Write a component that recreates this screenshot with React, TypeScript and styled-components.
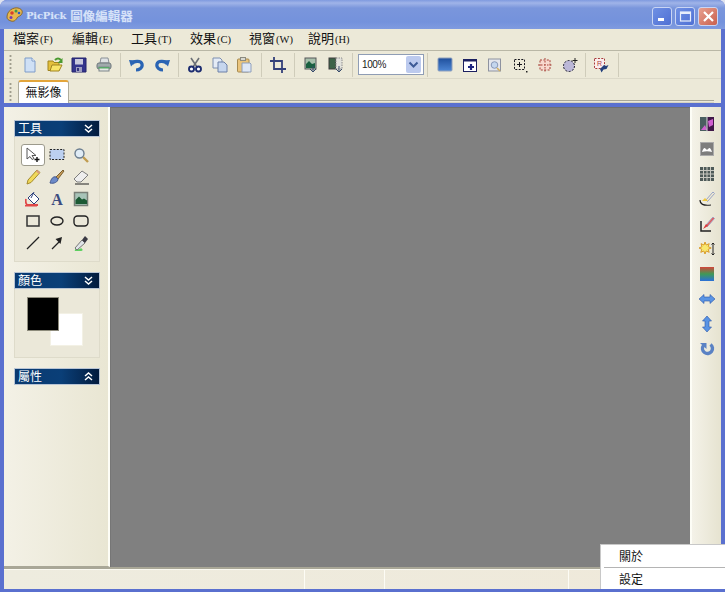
import React from "react";
import styled, { createGlobalStyle } from "styled-components";

const Global = createGlobalStyle`
  html, body { margin: 0; padding: 0; background: #dfe3ee; overflow: hidden; }
  * { box-sizing: border-box; }
`;

const cjk = `"Noto Sans CJK TC", "Noto Sans CJK SC", "Liberation Sans", sans-serif`;

const Window = styled.div`
  position: relative;
  width: 725px;
  height: 592px;
  display: flex;
  flex-direction: column;
  padding: 0 4px 3px;
  background: #5a70cf;
  border-radius: 7px 7px 0 0;
  overflow: hidden;
  font-family: ${cjk};
`;
const TitleBar = styled.div`
  height: 29px;
  margin: 0 -4px;
  padding: 0 6px 0 6px;
  display: flex;
  align-items: center;
  gap: 2px;
  background: linear-gradient(180deg, #7f9adf 0, #a0b4e8 3px, #7a96dc 8px, #7492dc 22px, #7f9be0 29px);
`;
const TitleText = styled.div`
  flex: 1;
  display: flex;
  align-items: center;
  gap: 4px;
  color: #d6e2f8;
  text-shadow: 0 0 1px #8ca5e6;
  padding-top: 1px;
`;
const TitleLatin = styled.span`
  font: bold 10px "DejaVu Serif", serif;
  letter-spacing: -0.2px;
`;
const TitleCjk = styled.span`
  font: bold 12.5px ${cjk};
`;
const CapButtons = styled.div`
  display: flex;
  gap: 3px;
  margin-top: 3px;
  margin-right: 1px;
`;
const CapButton = styled.div<{ $close?: boolean }>`
  width: 20px;
  height: 19px;
  border-radius: 3px;
  border: 1px solid #c9d5f4;
  background: ${(p) => (p.$close ? "linear-gradient(135deg,#e8a090,#c9604e)" : "linear-gradient(135deg,#6f90e4,#4f70d4)")};
  display: flex;
  align-items: center;
  justify-content: center;
`;
const MenuBar = styled.div`
  height: 21px;
  display: flex;
  align-items: center;
  padding: 0 0 3px 9px;
  gap: 17px;
  background: #ece9d8;
  font-size: 13px;
  color: #111;
`;
const MenuItem = styled.span`
  white-space: nowrap;
  width: 42px;
  line-height: 18px;
`;
const Mnemonic = styled.span`
  font: 10.5px "Liberation Serif", serif;
  margin-left: 1px;
`;
const ToolBar = styled.div`
  height: 29px;
  display: flex;
  align-items: center;
  padding-left: 5px;
  background: #ece9d8;
  border-top: 1px solid #b9b7a6;
  border-bottom: 1px solid #dcd9c9;
`;
const Grip = styled.div`
  width: 3px;
  height: 21px;
  margin-right: 6px;
  background-image: radial-gradient(circle, #a09e8e 1px, transparent 1.2px);
  background-size: 3px 4px;
  flex: none;
`;
const ToolBtn = styled.div<{ $wide?: boolean }>`
  width: ${(p) => (p.$wide ? 25 : 24.5)}px;
  height: 24px;
  display: flex;
  align-items: center;
  justify-content: center;
  flex: none;
`;
const Sep = styled.div<{ $tight?: boolean }>`
  width: 1px;
  height: 24px;
  margin: 0 ${(p) => (p.$tight ? 3 : 4)}px;
  background: #cfccba;
  flex: none;
`;
const Combo = styled.div`
  width: 66px;
  height: 21px;
  margin: 0 -1px 0 1px;
  padding: 0 2px 0 3px;
  display: flex;
  align-items: center;
  justify-content: space-between;
  background: #fff;
  border: 1px solid #8f9db5;
  font: 10px "Liberation Sans", sans-serif;
  letter-spacing: -0.4px;
  color: #222;
  flex: none;
`;
const ComboArrow = styled.div`
  width: 15px;
  height: 17px;
  border-radius: 2px;
  background: #bccaee;
  display: flex;
  align-items: center;
  justify-content: center;
`;
const TabBar = styled.div`
  height: 24px;
  display: flex;
  align-items: flex-end;
  padding: 0 6px 0 5px;
  background: #ece9d8;
  position: relative;
`;
const TabLine = styled.div`
  position: absolute;
  left: 65px;
  right: 7px;
  bottom: 0;
  height: 3px;
  border-top: 1px solid #a9a797;
  border-bottom: 1px solid #d5d2c2;
`;
const Tab = styled.div`
  width: 51px;
  height: 23px;
  background: #fff;
  border: 1px solid #aeac9c;
  border-bottom: none;
  border-top: 2px solid #e3a53a;
  border-radius: 3px 3px 0 0;
  font-size: 12px;
  line-height: 19px;
  color: #111;
  text-align: center;
`;
const Content = styled.div`
  flex: 1;
  display: flex;
  min-height: 0;
  margin-top: 4px;
  border-bottom: 2px solid #a9a797;
  background: #ece9d8;
`;
const LeftDock = styled.div`
  width: 106px;
  padding: 13px 9px 0 10px;
  display: flex;
  flex-direction: column;
  gap: 10px;
  background: linear-gradient(90deg, #f3f1e6, #e9e6d3);
  border-right: 2px solid #fdfdf6;
  border-bottom: 1px solid #a9a797;
  flex: none;
`;
const Panel = styled.div`
  width: 86px;
  display: flex;
  flex-direction: column;
`;
const PanelHead = styled.div`
  height: 17px;
  padding: 0 6px 1px 3px;
  display: flex;
  align-items: center;
  justify-content: space-between;
  color: #fff;
  font-size: 12px;
  line-height: 14px;
  background: linear-gradient(90deg, #0a3a70, #0a3f78 55%, #021b3e);
  border: 1px solid #b8c4d4;
`;
const PanelBody = styled.div<{ $h: number }>`
  height: ${(p) => p.$h}px;
  background: #ebe8d9;
  border: 1px solid #dedbca;
  border-top: none;
  position: relative;
`;
const ToolGrid = styled.div`
  display: grid;
  grid-template-columns: repeat(3, 24px);
  grid-auto-rows: 22px;
  padding: 7px 0 0 6px;
`;
const ToolCell = styled.div<{ $active?: boolean }>`
  display: flex;
  align-items: center;
  justify-content: center;
  border-radius: 3px;
  background: ${(p) => (p.$active ? "#fff" : "transparent")};
  border: ${(p) => (p.$active ? "1px solid #9c9a8c" : "none")};
`;
const Swatch = styled.div<{ $fg?: boolean }>`
  position: absolute;
  left: ${(p) => (p.$fg ? 12 : 35)}px;
  top: ${(p) => (p.$fg ? 8 : 24)}px;
  width: ${(p) => (p.$fg ? 32 : 33)}px;
  height: ${(p) => (p.$fg ? 34 : 33)}px;
  background: ${(p) => (p.$fg ? "#000" : "#fff")};
  border: ${(p) => (p.$fg ? "1px solid #8d8b7c" : "1px solid #f3f1e5")};
  z-index: ${(p) => (p.$fg ? 1 : 0)};
`;
const Canvas = styled.div`
  flex: 1;
  background: #808080;
  border-top: 1px solid #6f6f6f;
  border-left: 1px solid #767676;
`;
const RightDock = styled.div`
  width: 31px;
  padding: 4px 0 0 1px;
  display: flex;
  flex-direction: column;
  align-items: center;
  background: linear-gradient(90deg, #f4f2e8, #e6e3d0);
  border-left: 2px solid #fdfdf6;
  flex: none;
`;
const DockBtn = styled.div`
  height: 25px;
  width: 24px;
  display: flex;
  align-items: center;
  justify-content: center;
  flex: none;
`;
const StatusBar = styled.div`
  height: 20px;
  display: flex;
  background: linear-gradient(90deg, #eeecdf, #efe9da);
  border-top: 1px solid #fbfaf2;
`;
const StatusCell = styled.div<{ $w?: number }>`
  width: ${(p) => (p.$w ? `${p.$w}px` : "auto")};
  flex: ${(p) => (p.$w ? "none" : "1")};
  border-right: 1px solid #fdfcf5;
`;
const PopMenu = styled.div`
  position: absolute;
  left: 600px;
  top: 544px;
  width: 125px;
  height: 45px;
  background: #fff;
  border-left: 1px solid #c8c8c8;
  border-top: 1px solid #c8c8c8;
  padding-left: 18px;
  font-size: 12px;
  color: #111;
  overflow: hidden;
`;
const PopItem = styled.div`
  height: 22px;
  line-height: 22px;
`;
const PopSep = styled.div`
  height: 1px;
  margin: 0 0 0 -15px;
  background: #b4b4b4;
`;

type S = { children: React.ReactNode };
const I = ({ children }: S) => <svg width="16" height="16" viewBox="0 0 16 16">{children}</svg>;

const sel = (c: string, fill = "none") => (
  <rect x="2.5" y="2.5" width="10" height="10" fill={fill} stroke={c} strokeDasharray="2 1.4" />
);

const toolbarIcons: Record<string, React.ReactNode> = {
  new: <I><path d="M3 1h7l3 3v11H3z" fill="#cfe0f5" stroke="#7f9cc8" /><path d="M10 1v3h3" fill="#fff" stroke="#7f9cc8" /></I>,
  open: <I><path d="M1 4h5l1 1.500h5v8H1z" fill="#e4c03c" stroke="#a08420" /><path d="M3 14l2-6h10l-3 6z" fill="#f8e468" stroke="#a08420" /><path d="M8 3c2-2 4-2 6 0" fill="none" stroke="#4a9a30" strokeWidth="2" /><path d="M15.500 1v5h-5z" fill="#4a9a30" /></I>,
  save: <I><path d="M1 1h14v14H1z" fill="#34348c" stroke="#24246c" /><rect x="4" y="2" width="8" height="5.500" fill="#c8c8dc" /><rect x="5" y="10" width="6" height="5" fill="#9e9ec0" /><rect x="6" y="11" width="2" height="3" fill="#33337c" /></I>,
  print: <I><path d="M4 6l1-5h7l1 5z" fill="#dfe2e4" stroke="#8a9096" /><rect x="1" y="6" width="14" height="6" rx="2" fill="#a0aaac" stroke="#6f777c" /><rect x="3" y="10" width="10" height="4" fill="#e4e8e4" stroke="#7d8589" /><rect x="2.500" y="10" width="11" height="1.500" fill="#58a868" /></I>,
  undo: <I><path d="M3 7c1-3 9-4 10 0 1 4-3 6-6 6" fill="none" stroke="#2a64b4" strokeWidth="3.200" /><path d="M0 3l7.500 .5-5.500 6z" fill="#2a64b4" /></I>,
  redo: <I><path d="M13 7c-1-3-9-4-10 0-1 4 3 6 6 6" fill="none" stroke="#2a64b4" strokeWidth="3.200" /><path d="M16 3l-7.500 .5 5.500 6z" fill="#2a64b4" /></I>,
  cut: <I><path d="M4 1l6 9M12 1l-6 9" stroke="#6d7177" strokeWidth="1.600" /><circle cx="4.500" cy="12" r="2.500" fill="#fff" stroke="#1c2c70" strokeWidth="1.900" /><circle cx="11.500" cy="12" r="2.500" fill="#fff" stroke="#1c2c70" strokeWidth="1.900" /></I>,
  copy: <I><path d="M1 1h7l2 2v8H1z" fill="#e4ebf6" stroke="#7d8fb0" /><path d="M6 5h6l3 3v7H6z" fill="#c6d6ee" stroke="#6d80a8" /></I>,
  paste: <I><rect x="1.500" y="2" width="11.500" height="13" rx="1" fill="#eac47c" stroke="#a68a50" /><rect x="4.500" y="0.500" width="5" height="3" fill="#d8d8d0" stroke="#8b8b80" /><path d="M6 6h8l1 1v8H6z" fill="#dfe8f6" stroke="#8fa0bc" /></I>,
  crop: <I><path d="M4 0v12h12M0 4h12v12" fill="none" stroke="#33407a" strokeWidth="1.800" /></I>,
  imp: <I><rect x="2" y="1" width="11" height="11" fill="#a8c0ac" stroke="#56585a" /><path d="M3 7l3-3 3 3 3-1v5H3z" fill="#1a6040" /><path d="M10 9v6M7 12l3 3 3-3" stroke="#394c6c" fill="none" /></I>,
  exp: <I><rect x="1" y="1" width="7" height="11" fill="#3c6248" stroke="#3c3c3c" /><rect x="8" y="1" width="6" height="11" fill="#e2e2dc" stroke="#8c8c8c" strokeDasharray="1.500 1" /><path d="M11 9v6M8 12l3 3 3-3" stroke="#394c6c" fill="none" /></I>,
  win: <I><defs><linearGradient id="wg" x1="0" y1="0" x2="0" y2="1"><stop offset="0" stopColor="#1f4f9c" /><stop offset="1" stopColor="#4d86d4" /></linearGradient></defs><rect x="1" y="1" width="14" height="13" rx="1" fill="url(#wg)" stroke="#8fa0bc" /></I>,
  winAdd: <I><rect x="1.500" y="2.500" width="13" height="12" fill="#fff" stroke="#1c2060" /><rect x="1.500" y="2.500" width="13" height="2" fill="#1c2060" /><path d="M9 7v6M6 10h6" stroke="#1c2480" strokeWidth="2.200" /></I>,
  page: <I><rect x="1.500" y="2" width="12" height="12" fill="#e4e6ec" stroke="#8e93a0" /><circle cx="7.500" cy="8" r="3.300" fill="#c4d6ee" stroke="#8898b8" /><path d="M10 11l3 3" stroke="#d2b060" strokeWidth="1.600" /></I>,
  selAdd: <I>{sel("#15151c")}<path d="M7.500 5v5M5 7.500h5" stroke="#15151c" /><path d="M14 14h1.500v1.500H14z" fill="#222" /></I>,
  selRed: <I><rect x="3" y="3" width="10" height="10" fill="#f8d8d0" stroke="#a84038" strokeDasharray="2 1.400" /><path d="M8 1v14M1 8h14" stroke="#a84038" strokeDasharray="1.500 1.500" /></I>,
  lasso: <I><circle cx="7" cy="9" r="5.500" fill="#bcb8d8" stroke="#1e1e30" strokeDasharray="2 1.400" /><path d="M13 1v5M10.500 3.500h5" stroke="#222" /></I>,
  snap: <I><rect x="1.500" y="1.500" width="10" height="10" fill="#fbeeee" stroke="#a83c3c" strokeDasharray="2 1.400" /><text x="6.500" y="8.500" textAnchor="middle" fontFamily="Liberation Sans" fontSize="7" fill="#b04040">R</text><path d="M7 12l4-4 2 1 2.500-1-2 4-3 .5-2 3z" fill="#23407c" /></I>,
};

const toolIcons: Record<string, React.ReactNode> = {
  pointer: <I><path d="M2 1v11l3-2.500 2 3 2-1-2-3h4z" fill="#fff" stroke="#555" /><path d="M12 10v5M9.500 12.500h5" stroke="#111" strokeWidth="1.400" /></I>,
  marquee: <I><rect x="1" y="2.500" width="14" height="10" fill="#bcd0f0" stroke="#222" strokeDasharray="2 1.400" /></I>,
  zoom: <I><path d="M10 10l5 5" stroke="#c09c50" strokeWidth="2.400" /><circle cx="6.500" cy="6.500" r="4.500" fill="#e0ecf6" stroke="#6c7e90" strokeWidth="1.400" /></I>,
  pencil: <I><path d="M3 11l9-10 3 2.500-9 10-4 1.500z" fill="#f1d95a" stroke="#a48a2a" /><path d="M12 1l3 2.500-1 1.500-3-2.500z" fill="#d89a80" /></I>,
  brush: <I><path d="M7 8l7-7 1 1-6 8z" fill="#c89c58" stroke="#7a6030" /><path d="M1 14c1-4 3-7 6-6l2 2c0 3-4 5-8 4z" fill="#6c8ac8" stroke="#465a90" /></I>,
  eraser: <I><path d="M1 10l8-8 6 4-7 7H4z" fill="#eee" stroke="#7d7d7d" /><path d="M2 15h14" stroke="#222" /></I>,
  fill: <I><path d="M3 7l5-5 6 6-5 5z" fill="#fff" stroke="#2b3f7a" /><path d="M6 7l3-6" stroke="#2b3f7a" /><path d="M1 8c-1 3 0 4 1 6h11" fill="none" stroke="#e04848" strokeWidth="1.800" /><path d="M0 14h12v1.500H0z" fill="#e04848" /></I>,
  text: <I><text x="8" y="13.500" textAnchor="middle" fontFamily="Liberation Serif" fontWeight="bold" fontSize="16" fill="#3c4c80">A</text></I>,
  image: <I><rect x="1.500" y="1.500" width="13" height="13" fill="#a8c4b8" stroke="#7a8078" strokeWidth="1.500" /><path d="M2.500 9l3.500-3.500 3 3 2-1 3 2v3.500H2.500z" fill="#1c5a34" /></I>,
  rect: <I><rect x="2" y="3" width="12" height="10" fill="none" stroke="#333" strokeWidth="1.500" /></I>,
  ellipse: <I><ellipse cx="8" cy="8" rx="6" ry="4" fill="none" stroke="#222" strokeWidth="1.400" /></I>,
  round: <I><rect x="1" y="3" width="14" height="10" rx="3.500" fill="none" stroke="#222" strokeWidth="1.400" /></I>,
  line: <I><path d="M2 14L14 2" stroke="#222" strokeWidth="1.200" /></I>,
  arrow: <I><path d="M3 14l7-7" stroke="#222" strokeWidth="1.300" /><path d="M13 2l-1.500 7-5-5z" fill="#222" /></I>,
  dropper: <I><path d="M2 15c3 1 6 0 7-1" stroke="#5ed060" strokeWidth="2.500" fill="none" /><path d="M2 13l7-8 3 3-8 7z" fill="#dfe4e8" stroke="#777" /><path d="M9 5l3-4 3 3-3 4z" fill="#3a3a44" /></I>,
};

const dockIcons: React.ReactNode[] = [
  <I key="0"><rect x="1" y="1" width="7" height="14" fill="#4a5e60" /><rect x="8" y="1" width="7" height="14" fill="#401848" /><path d="M2 14l4-5 2 5zM9 5l5-2v6l-4 2z" fill="#d060d0" /><path d="M8 0v16" stroke="#dcdcdc" /></I>,
  <I key="1"><rect x="1.500" y="1.500" width="13" height="13" fill="#7d7d7d" stroke="#aaa" /><path d="M3 11c2-6 3-4 5-2 2-2 3-4 5 2-3-1-7-1-10 0z" fill="#fff" /></I>,
  <I key="2"><rect x="1" y="1" width="14" height="14" fill="#4e5a58" /><path d="M1 4.500h14M1 8h14M1 11.500h14M4.500 1v14M8 1v14M11.500 1v14" stroke="#c8c8c0" /></I>,
  <I key="3"><path d="M7 9l7-8 1.500 1.500-7 8z" fill="#f3ecd0" stroke="#96a2c8" /><path d="M1 9c0 4 3 6 11 5" fill="none" stroke="#222" strokeWidth="1.200" /><path d="M3 10l3-3 3 3" fill="#f0c840" /></I>,
  <I key="4"><path d="M7 9l7-8 1.500 1.500-7 8z" fill="#e85a5a" stroke="#a2a2c0" /><path d="M2 5v10h10" fill="none" stroke="#222" strokeWidth="1.500" /><path d="M4 13l3-5 2 2z" fill="#d83a3a" /></I>,
  <I key="5"><path d="M6 1l1.200 3 3-1.300-1 3 3 1.300-3 1.300 1 3-3-1.300L6 13l-1.200-3-3 1.300 1-3L0 7l3-1.300-1-3 3 1.300z" fill="#f8e870" stroke="#d89a28" /><path d="M14 2v12M12.500 3.500L14 2l1.500 1.500M12.500 12.500L14 14l1.500-1.500" stroke="#222" fill="none" /></I>,
  <I key="6"><defs><linearGradient id="rgb" x1="0" y1="0" x2="0" y2="1"><stop offset="0" stopColor="#d2453a" /><stop offset=".5" stopColor="#3f9a55" /><stop offset="1" stopColor="#2a6fd8" /></linearGradient></defs><rect x="1" y="1" width="14" height="14" fill="url(#rgb)" /></I>,
  <I key="7"><path d="M0 8l5-4.500V6h6V3.500L16 8l-5 4.500V10H5v2.500z" fill="#5a94e4" stroke="#2a56a8" strokeWidth=".6" /></I>,
  <I key="8"><path d="M8 0l4.500 5H10v6h2.500L8 16l-4.500-5H6V5H3.500z" fill="#5a94e4" stroke="#2a56a8" strokeWidth=".6" /></I>,
  <I key="9"><path d="M11.500 3.500a5 5 0 1 1-7 1" fill="none" stroke="#5a82c4" strokeWidth="3.400" /><path d="M1 2h6.500v6z" fill="#5a82c4" /></I>,
];

const toolRows = ["pointer", "marquee", "zoom", "pencil", "brush", "eraser", "fill", "text", "image", "rect", "ellipse", "round", "line", "arrow", "dropper"];
const menus: [string, string][] = [["檔案", "(F)"], ["編輯", "(E)"], ["工具", "(T)"], ["效果", "(C)"], ["視窗", "(W)"], ["說明", "(H)"]];

const Tb = ({ n, wide }: { n: string; wide?: boolean }) => <ToolBtn $wide={wide}>{toolbarIcons[n]}</ToolBtn>;
const Chevrons = ({ up }: { up?: boolean }) => (
  <svg width="9" height="9" viewBox="0 0 9 9">
    <path d={up ? "M1 4l3.500-3L8 4M1 8l3.500-3L8 8" : "M1 1l3.500 3L8 1M1 5l3.500 3L8 5"} fill="none" stroke="#fff" strokeWidth="1.500" />
  </svg>
);

export default function App() {
  return (
    <Window>
      <Global />
      <TitleBar>
        <svg width="18" height="18" viewBox="0 0 18 18">
          <path d="M1 11C1 5 7 1 12 2c5 1 5 5 3 7-2 2-3 1-4 3s-3 4-6 3c-3-1-4-2-4-4z" fill="#e8b84c" stroke="#8a6a30" />
          <circle cx="6" cy="7" r="1.800" fill="#d8402c" /><circle cx="10" cy="5" r="1.500" fill="#3a9a50" /><circle cx="13" cy="7" r="1.300" fill="#2c5cc0" /><circle cx="5" cy="11.500" r="1.500" fill="#7a3ab0" />
        </svg>
        <TitleText><TitleLatin>PicPick</TitleLatin><TitleCjk>圖像編輯器</TitleCjk></TitleText>
        <CapButtons>
          <CapButton><svg width="12" height="12" viewBox="0 0 12 12"><rect x="2" y="8" width="6" height="3" fill="#fff" /></svg></CapButton>
          <CapButton><svg width="13" height="13" viewBox="0 0 13 13"><rect x="1.500" y="2" width="10" height="9" fill="none" stroke="#e8eefb" strokeWidth="1.200" /><rect x="1.500" y="2" width="10" height="2" fill="#e8eefb" /></svg></CapButton>
          <CapButton $close><svg width="13" height="13" viewBox="0 0 13 13"><path d="M2 2l9 9M11 2l-9 9" stroke="#fff" strokeWidth="2.200" /></svg></CapButton>
        </CapButtons>
      </TitleBar>
      <MenuBar>
        {menus.map(([t, m]) => <MenuItem key={t}>{t}<Mnemonic>{m}</Mnemonic></MenuItem>)}
      </MenuBar>
      <ToolBar>
        <Grip />
        <Tb n="new" /><Tb n="open" /><Tb n="save" /><Tb n="print" /><Sep />
        <Tb n="undo" /><Tb n="redo" /><Sep />
        <Tb n="cut" /><Tb n="copy" /><Tb n="paste" /><Sep />
        <Tb n="crop" /><Sep />
        <Tb n="imp" /><Tb n="exp" /><Sep />
        <Combo>100%<ComboArrow><svg width="11" height="8" viewBox="0 0 11 8"><path d="M1.500 1.500L5.500 5.500 9.500 1.500" fill="none" stroke="#3d5a96" strokeWidth="2" /></svg></ComboArrow></Combo>
        <Sep />
        <Tb n="win" wide /><Tb n="winAdd" wide /><Tb n="page" wide /><Tb n="selAdd" wide /><Tb n="selRed" wide /><Tb n="lasso" wide /><Sep $tight />
        <Tb n="snap" /><Sep />
      </ToolBar>
      <TabBar>
        <Grip />
        <Tab>無影像</Tab>
        <TabLine />
      </TabBar>
      <Content>
        <LeftDock>
          <Panel>
            <PanelHead>工具<Chevrons /></PanelHead>
            <PanelBody $h={125}>
              <ToolGrid>
                {toolRows.map((n, i) => <ToolCell key={n} $active={i === 0}>{toolIcons[n]}</ToolCell>)}
              </ToolGrid>
            </PanelBody>
          </Panel>
          <Panel>
            <PanelHead>顏色<Chevrons /></PanelHead>
            <PanelBody $h={69}><Swatch $fg /><Swatch /></PanelBody>
          </Panel>
          <Panel>
            <PanelHead>屬性<Chevrons up /></PanelHead>
          </Panel>
        </LeftDock>
        <Canvas />
        <RightDock>
          {dockIcons.map((ic, i) => <DockBtn key={i}>{ic}</DockBtn>)}
        </RightDock>
      </Content>
      <StatusBar>
        <StatusCell $w={301} /><StatusCell $w={80} /><StatusCell $w={184} /><StatusCell />
      </StatusBar>
      <PopMenu>
        <PopItem>關於</PopItem>
        <PopSep />
        <PopItem>設定</PopItem>
      </PopMenu>
    </Window>
  );
}
